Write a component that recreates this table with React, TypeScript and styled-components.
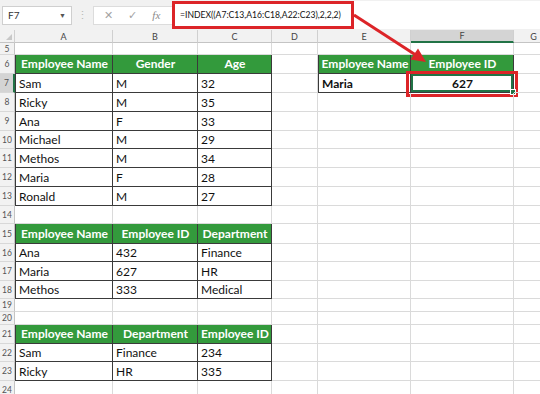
import React from 'react';
import styled, { createGlobalStyle, css } from 'styled-components';

const GlobalStyle = createGlobalStyle`
  html, body { margin: 0; padding: 0; background: #fff; overflow: hidden; }
  body { font-family: Lato, "Liberation Sans", sans-serif; }
  * { box-sizing: border-box; }
`;

const GREEN = '#339a3c';
const DARK = '#3a3a3a';
const GRID = '#dadada';

const Page = styled.div`
  position: relative;
  width: 540px;
  height: 394px;
  overflow: hidden;
  background: #fff;
`;

const Toolbar = styled.div`
  height: 30px;
  display: flex;
  align-items: center;
  background: #f1f1f1;
  padding-left: 2px;
`;

const NameBox = styled.div`
  width: 70px;
  height: 19px;
  background: #fff;
  border: 1px solid #cfcfcf;
  display: flex;
  align-items: center;
  justify-content: space-between;
  padding: 0 5px 0 5px;
  font-size: 10px;
  color: #333;
`;

const Caret = styled.span`
  font-size: 7px;
  color: #555;
`;

const Dots = styled.div`
  width: 21px;
  text-align: center;
  color: #b8b8b8;
  font-size: 11px;
`;

const FxBox = styled.div`
  width: 79px;
  height: 19px;
  background: #fff;
  border: 1px solid #dcdcdc;
  border-right: none;
  display: flex;
  align-items: center;
  justify-content: space-around;
  padding: 0 4px 0 2px;
  color: #a3a3a3;
  font-size: 11px;
`;

const FxGlyph = styled.span`
  font-family: "Liberation Serif", serif;
  font-style: italic;
  font-size: 11px;
  color: #8a8a8a;
`;

const FormulaBar = styled.div`
  flex: 1;
  height: 28px;
  background: #fff;
  display: flex;
  align-items: stretch;
`;

const FormulaText = styled.div`
  width: 182px;
  border: 3px solid #dc2428;
  display: flex;
  align-items: center;
  padding-left: 5px;
  font-size: 8.6px;
  color: #111;
  white-space: nowrap;
  overflow: hidden;
`;

const Sheet = styled.div`
  display: grid;
  grid-template-columns: 15px 98px 85px 74px 46px 93px 103px 40px;
  grid-template-rows: 13px 12px 19px 19px 19px 19px 18px 19px 19px 19px 18px 20px 18px 19px 18px 13px 13px 19px 18px 19px 18px;
`;

const Corner = styled.div`
  background: #f2f2f2;
  border-right: 1px solid #d0d0d0;
  border-bottom: 1px solid #c4c4c4;
  position: relative;
  &::after {
    content: '';
    position: absolute;
    right: 2px;
    bottom: 2px;
    border-left: 6px solid transparent;
    border-bottom: 6px solid #c8c8c8;
  }
`;

const ColHead = styled.div<{ $sel?: boolean }>`
  background: ${(p) => (p.$sel ? '#d4d4d4' : '#f2f2f2')};
  border-right: 1px solid #d0d0d0;
  border-bottom: ${(p) => (p.$sel ? `2px solid #217346` : '1px solid #c4c4c4')};
  font-size: 9px;
  color: #444;
  display: flex;
  align-items: center;
  justify-content: center;
`;

const RowHead = styled.div<{ $sel?: boolean }>`
  background: ${(p) => (p.$sel ? '#d4d4d4' : '#f2f2f2')};
  border-right: ${(p) => (p.$sel ? `2px solid #217346` : '1px solid #c4c4c4')};
  border-bottom: 1px solid #d8d8d8;
  font-size: 8.5px;
  line-height: 10px;
  color: #555;
  display: flex;
  align-items: center;
  justify-content: center;
`;

type Kind = 'g' | 'b' | 'h';

const Cell = styled.div<{ $kind: Kind; $bold?: boolean; $center?: boolean; $edge?: boolean; $sel?: boolean }>`
  position: relative;
  display: flex;
  align-items: flex-end;
  justify-content: ${(p) => (p.$center ? 'center' : 'flex-start')};
  padding: 0 2px 1px 3px;
  font-size: 12px;
  line-height: 14px;
  white-space: nowrap;
  color: #111;
  border-right: 1px solid ${GRID};
  border-bottom: 1px solid ${GRID};
  ${(p) =>
    p.$kind === 'b' &&
    css`
      border-right-color: ${DARK};
      border-bottom-color: ${DARK};
    `}
  ${(p) =>
    p.$kind === 'h' &&
    css`
      background: ${GREEN};
      color: #fff;
      font-weight: 700;
      justify-content: center;
      border-right-color: ${DARK};
      border-bottom-color: ${DARK};
      padding-bottom: 2px;
    `}
  ${(p) =>
    p.$edge &&
    css`
      border-left: 1px solid ${DARK};
    `}
  ${(p) =>
    p.$bold &&
    css`
      font-weight: 700;
    `}
  ${(p) =>
    p.$sel &&
    css`
      box-shadow: inset 0 0 0 2px #217346;
    `}
`;

const Highlight = styled.div`
  position: absolute;
  left: -5px;
  right: -5px;
  top: -3px;
  bottom: -5px;
  border: 3px solid #dc2428;
  pointer-events: none;
`;

const FillHandle = styled.div`
  position: absolute;
  right: -3px;
  bottom: -3px;
  width: 6px;
  height: 6px;
  background: #217346;
  border: 1px solid #fff;
`;

const Overlay = styled.svg`
  position: absolute;
  left: 0;
  top: 0;
  pointer-events: none;
`;

type C = { t?: string; k?: Kind; bold?: boolean; center?: boolean; edge?: boolean; sel?: boolean };

const H = (t: string, edge = false): C => ({ t, k: 'h', edge });
const B = (t: string, edge = false): C => ({ t, k: 'b', edge });
const E: C = {};

const tableRow = (a: string, b: string, c: string): C[] => [B(a, true), B(b), B(c), E, E, E, E];

const rows: { n: number; cells: C[] }[] = [
  { n: 5, cells: [E, E, E, E, E, E, E] },
  {
    n: 6,
    cells: [H('Employee Name', true), H('Gender'), H('Age'), E, H('Employee Name', true), H('Employee ID'), E],
  },
  {
    n: 7,
    cells: [
      B('Sam', true),
      B('M'),
      B('32'),
      E,
      { t: 'Maria', k: 'b', bold: true, edge: true },
      { t: '627', k: 'b', bold: true, center: true, sel: true },
      E,
    ],
  },
  { n: 8, cells: tableRow('Ricky', 'M', '35') },
  { n: 9, cells: tableRow('Ana', 'F', '33') },
  { n: 10, cells: tableRow('Michael', 'M', '29') },
  { n: 11, cells: tableRow('Methos', 'M', '34') },
  { n: 12, cells: tableRow('Maria', 'F', '28') },
  { n: 13, cells: tableRow('Ronald', 'M', '27') },
  { n: 14, cells: [E, E, E, E, E, E, E] },
  { n: 15, cells: [H('Employee Name', true), H('Employee ID'), H('Department'), E, E, E, E] },
  { n: 16, cells: tableRow('Ana', '432', 'Finance') },
  { n: 17, cells: tableRow('Maria', '627', 'HR') },
  { n: 18, cells: tableRow('Methos', '333', 'Medical') },
  { n: 19, cells: [E, E, E, E, E, E, E] },
  { n: 20, cells: [E, E, E, E, E, E, E] },
  { n: 21, cells: [H('Employee Name', true), H('Department'), H('Employee ID'), E, E, E, E] },
  { n: 22, cells: tableRow('Sam', 'Finance', '234') },
  { n: 23, cells: tableRow('Ricky', 'HR', '335') },
  { n: 24, cells: [E, E, E, E, E, E, E] },
];

const letters = ['A', 'B', 'C', 'D', 'E', 'F', 'G'];

export default function App() {
  return (
    <Page>
      <GlobalStyle />
      <Toolbar>
        <NameBox>
          <span>F7</span>
          <Caret>▼</Caret>
        </NameBox>
        <Dots>⋮</Dots>
        <FxBox>
          <span>✕</span>
          <span>✓</span>
          <FxGlyph>fx</FxGlyph>
        </FxBox>
        <FormulaBar>
          <FormulaText>=INDEX((A7:C13,A16:C18,A22:C23),2,2,2)</FormulaText>
        </FormulaBar>
      </Toolbar>
      <Sheet>
        <Corner />
        {letters.map((l) => (
          <ColHead key={l} $sel={l === 'F'}>
            {l}
          </ColHead>
        ))}
        {rows.map((r) => (
          <React.Fragment key={r.n}>
            <RowHead $sel={r.n === 7}>{r.n}</RowHead>
            {r.cells.map((c, i) => (
              <Cell
                key={i}
                $kind={c.k ?? 'g'}
                $bold={c.bold}
                $center={c.center}
                $edge={c.edge}
                $sel={c.sel}
              >
                {c.t}
                {c.sel && (
                  <>
                    <Highlight />
                    <FillHandle />
                  </>
                )}
              </Cell>
            ))}
          </React.Fragment>
        ))}
      </Sheet>
      <Overlay width={540} height={394} viewBox="0 0 540 394">
        <line x1={354} y1={15} x2={415} y2={54.5} stroke="#dc2428" strokeWidth={3} />
        <polygon points="426,62 410.5,59.5 418,48.5" fill="#dc2428" />
      </Overlay>
    </Page>
  );
}
